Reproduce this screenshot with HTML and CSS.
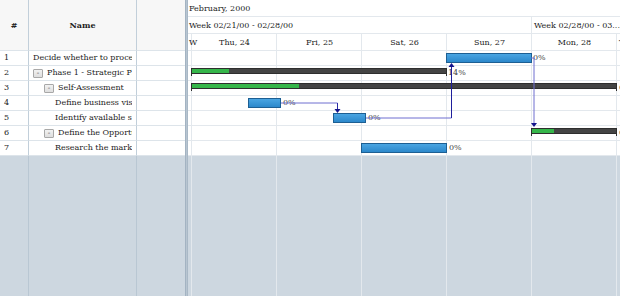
FILE: index.html
```html
<!DOCTYPE html>
<html>
<head>
<meta charset="utf-8">
<title>Gantt</title>
<link rel="stylesheet" href="styles.css">
</head>
<body>
<div class="gantt">
  <div class="grid">
    <div class="hcell num">#</div>
    <div class="hcell name">Name</div>
    <div class="hcell extra"></div>

    <div class="cell num">1</div>
    <div class="cell name lvl0"><span class="txt">Decide whether to proceed</span></div>
    <div class="cell extra"></div>

    <div class="cell num">2</div>
    <div class="cell name lvl0"><span class="tog">-</span><span class="txt">Phase 1 - Strategic Plan</span></div>
    <div class="cell extra"></div>

    <div class="cell num">3</div>
    <div class="cell name lvl1"><span class="tog">-</span><span class="txt">Self-Assessment</span></div>
    <div class="cell extra"></div>

    <div class="cell num">4</div>
    <div class="cell name lvl2"><span class="txt">Define business vision</span></div>
    <div class="cell extra"></div>

    <div class="cell num">5</div>
    <div class="cell name lvl2"><span class="txt">Identify available skills</span></div>
    <div class="cell extra"></div>

    <div class="cell num">6</div>
    <div class="cell name lvl1"><span class="tog">-</span><span class="txt">Define the Opportunity</span></div>
    <div class="cell extra"></div>

    <div class="cell num">7</div>
    <div class="cell name lvl2"><span class="txt">Research the market</span></div>
    <div class="cell extra"></div>

    <div class="fill num"></div>
    <div class="fill name"></div>
    <div class="fill extra"></div>
  </div>

  <div class="splitter"></div>

  <div class="chart">
    <div class="tier">
      <div class="tcell month">February, 2000</div>
    </div>
    <div class="tier">
      <div class="tcell week1">Week 02/21/00 - 02/28/00</div>
      <div class="tcell week2">Week 02/28/00 - 03...</div>
    </div>
    <div class="tier days">
      <div class="tcell d0">W</div>
      <div class="tcell day">Thu, 24</div>
      <div class="tcell day">Fri, 25</div>
      <div class="tcell day">Sat, 26</div>
      <div class="tcell day">Sun, 27</div>
      <div class="tcell day">Mon, 28</div>
      <div class="tcell dlast">T</div>
    </div>

    <div class="body">
      <div class="cols">
        <div class="col c0"></div>
        <div class="col"></div>
        <div class="col"></div>
        <div class="col"></div>
        <div class="col"></div>
        <div class="col"></div>
        <div class="col clast"></div>
      </div>

      <div class="row">
        <div class="task" style="left:258px;width:86px"></div>
        <span class="pct" style="left:345px">0%</span>
      </div>
      <div class="row">
        <div class="summary" style="left:3px;width:256px"><div class="done" style="width:37px"></div></div>
        <span class="pct" style="left:260px">14%</span>
      </div>
      <div class="row">
        <div class="summary" style="left:3px;width:426px"><div class="done" style="width:107px"></div></div>
        <span class="pct" style="left:431px">0%</span>
      </div>
      <div class="row">
        <div class="task" style="left:60px;width:33px"></div>
        <span class="pct" style="left:95px">0%</span>
      </div>
      <div class="row">
        <div class="task" style="left:145px;width:33px"></div>
        <span class="pct" style="left:180px">0%</span>
      </div>
      <div class="row">
        <div class="summary" style="left:343px;width:86px"><div class="done" style="width:22px"></div></div>
        <span class="pct" style="left:431px">0%</span>
      </div>
      <div class="row">
        <div class="task" style="left:173px;width:86px"></div>
        <span class="pct" style="left:261px">0%</span>
      </div>
      <div class="rest"></div>

      <svg class="deps" width="432" height="245" viewBox="0 0 432 245">
        <g fill="none" stroke-width="1">
          <polyline stroke="#6e6ed0" points="93,52 149.5,52"/>
          <polyline stroke="#2b2ba6" points="149.5,52 149.5,59"/>
          <polyline stroke="#6e6ed0" points="178,67 263.5,67"/>
          <polyline stroke="#1f1f9c" points="263.5,67 263.5,15"/>
          <polyline stroke="#6e6ed0" points="343,7 346,7 346,73"/>
        </g>
        <g fill="#13138a">
          <polygon points="146.5,58 152.5,58 149.5,62"/>
          <polygon points="260.5,16 266.5,16 263.5,12"/>
          <polygon points="343,72 349,72 346,76"/>
        </g>
      </svg>
    </div>
  </div>
</div>
</body>
</html>
```

FILE: styles.css
```css
* {
  box-sizing: border-box;
  margin: 0;
  padding: 0;
}

html, body {
  width: 620px;
  height: 300px;
  overflow: hidden;
  background: #ffffff;
}

body {
  font-family: "DejaVu Serif", serif;
  font-size: 8px;
  color: #222222;
}

.gantt {
  display: flex;
  height: 296px;
  background: #cdd7e0;
}

/* ---------- left grid ---------- */
.grid {
  display: grid;
  grid-template-columns: 29px 108px 48px;
  grid-template-rows: 51px repeat(7, 15px) 1fr;
  width: 185px;
  flex: none;
}

.hcell,
.cell,
.fill {
  border-right: 1px solid #c2cfda;
  border-bottom: 1px solid #dde4ea;
  overflow: hidden;
  white-space: nowrap;
}

.extra {
  border-right: none;
}

.hcell {
  background: #f7f7f7;
  font-weight: bold;
  display: flex;
  align-items: center;
  justify-content: center;
  color: #222;
}

.cell {
  background: #ffffff;
  display: flex;
  align-items: center;
  line-height: 14px;
}

.cell.num {
  padding-left: 4px;
}

.cell.name {
  padding-right: 4px;
  gap: 4px;
}

.lvl0 { padding-left: 4px; }
.lvl1 { padding-left: 15px; }
.lvl2 { padding-left: 26px; }

.txt {
  flex: 1;
  min-width: 0;
  overflow: hidden;
  white-space: nowrap;
}

.tog {
  flex: none;
  width: 10px;
  height: 9px;
  border: 1px solid #a8a8a8;
  border-radius: 1px;
  background: linear-gradient(#f2f2f2, #dedede);
  color: #444;
  font-family: "DejaVu Sans", sans-serif;
  font-size: 7px;
  line-height: 7px;
  text-align: center;
}

.fill {
  background: #cdd7e0;
  border-bottom: none;
  border-right-color: #b9c7d3;
}

.fill.extra {
  border-right: none;
}

/* ---------- splitter ---------- */
.splitter {
  width: 3px;
  flex: none;
  background: #b8c5d1;
  border-left: 1px solid #a3b3c2;
  border-right: 1px solid #a9b8c6;
}

/* ---------- chart ---------- */
.chart {
  flex: 1;
  min-width: 0;
  display: flex;
  flex-direction: column;
  overflow: hidden;
}

.tier {
  display: flex;
  height: 17px;
  flex: none;
  background: #ffffff;
  border-bottom: 1px solid #e3e8ed;
}

.tcell {
  display: flex;
  align-items: center;
  white-space: nowrap;
  padding-left: 1px;
  color: #222;
}

.month {
  flex: 1;
}

.week1 {
  width: 344px;
  flex: none;
  border-right: 1px solid #e3e8ed;
}

.week2 {
  flex: 1;
  padding-left: 2px;
  overflow: hidden;
}

.d0 {
  width: 4px;
  flex: none;
  border-right: 1px solid #e3e8ed;
  overflow: visible;
}

.day {
  width: 85px;
  flex: none;
  justify-content: center;
  border-right: 1px solid #e3e8ed;
}

.dlast {
  flex: 1;
  padding-left: 2px;
}

.body {
  position: relative;
  flex: 1;
  display: flex;
  flex-direction: column;
}

.cols {
  position: absolute;
  inset: 0;
  display: flex;
  z-index: 1;
  pointer-events: none;
}

.col {
  width: 85px;
  flex: none;
  border-right: 1px solid #e3e8ed;
}

.col.c0 {
  width: 4px;
}

.col.clast {
  flex: 1;
  border-right: none;
}

.row {
  position: relative;
  height: 15px;
  flex: none;
  background: #ffffff;
  border-bottom: 1px solid #e3e8ed;
}

.rest {
  flex: 1;
}

.task {
  position: absolute;
  top: 2px;
  height: 10px;
  background: linear-gradient(#4aa5e2, #2c88cb);
  border: 1px solid #1d5f93;
  z-index: 2;
}

.summary {
  position: absolute;
  top: 2px;
  height: 6px;
  background: #444444;
  border: 1px solid #2e2e2e;
  z-index: 2;
}

.summary::before,
.summary::after {
  content: "";
  position: absolute;
  bottom: -3px;
  width: 1px;
  height: 3px;
  background: #2e2e2e;
}

.summary::before { left: -1px; }
.summary::after { right: -1px; }

.done {
  height: 100%;
  background: #35b64a;
}

.pct {
  position: absolute;
  top: 0;
  line-height: 14px;
  color: #444;
  z-index: 2;
  white-space: nowrap;
}

.deps {
  position: absolute;
  left: 0;
  top: 0;
  z-index: 3;
  overflow: visible;
}
```
